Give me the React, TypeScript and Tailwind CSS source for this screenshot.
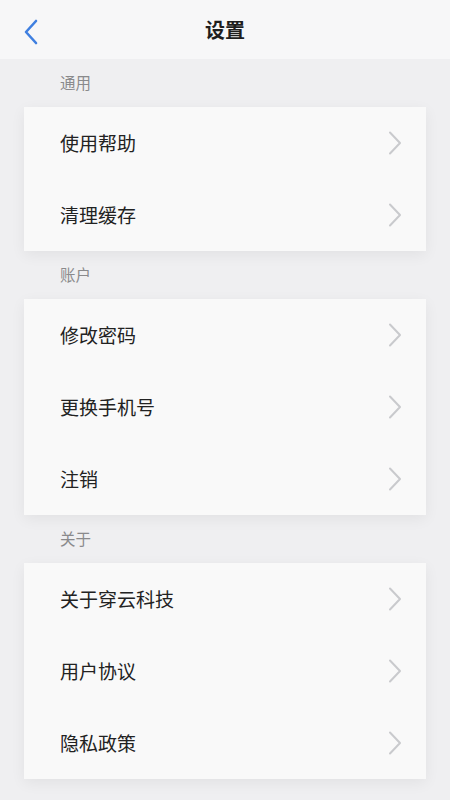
import React from "react";

const sections = [
  { title: "通用", items: ["使用帮助", "清理缓存"] },
  { title: "账户", items: ["修改密码", "更换手机号", "注销"] },
  { title: "关于", items: ["关于穿云科技", "用户协议", "隐私政策"] },
];

function Chevron() {
  return (
    <svg width="14" height="24" viewBox="0 0 14 24" fill="none">
      <path d="M2 1.5 L12 12 L2 22.5" stroke="#c9cacd" strokeWidth="2" strokeLinecap="round" strokeLinejoin="round" />
    </svg>
  );
}

export default function App() {
  return (
    <div
      className="w-[450px] h-[800px] bg-[#efeff1] overflow-hidden"
      style={{ fontFamily: '"Noto Sans CJK SC", "Noto Sans", sans-serif' }}
    >
      <div className="h-[59px] bg-[#f7f7f8] flex items-center relative">
        <div className="absolute left-[22px] top-[19px]">
          <svg width="18" height="26" viewBox="0 0 18 26" fill="none">
            <path d="M14 2 L4 13 L14 24" stroke="#3f7fe0" strokeWidth="2.6" strokeLinecap="round" strokeLinejoin="round" />
          </svg>
        </div>
        <div className="flex-1 text-center text-[20px] font-bold text-[#1e1e1e] leading-none">设置</div>
      </div>
      {sections.map((s) => (
        <div key={s.title}>
          <div className="h-[48px] flex items-center pl-[60px] text-[15.5px] text-[#8a8a8c]">{s.title}</div>
          <div className="mx-[24px] bg-[#f9f9f9] shadow-[0_4px_14px_rgba(0,0,0,0.06)]">
            {s.items.map((it) => (
              <div key={it} className="h-[72px] flex items-center justify-between pl-[36px] pr-[24px]">
                <span className="text-[19px] text-[#222222]">{it}</span>
                <Chevron />
              </div>
            ))}
          </div>
        </div>
      ))}
    </div>
  );
}
